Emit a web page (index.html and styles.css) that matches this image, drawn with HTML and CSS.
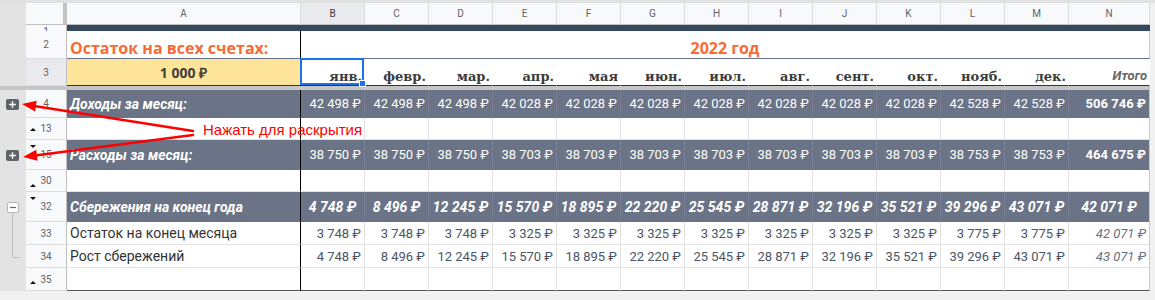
FILE: index.html
```html
<!DOCTYPE html>
<html lang="ru">
<head>
<meta charset="utf-8">
<title>Бюджет 2022</title>
<link rel="stylesheet" href="styles.css">
</head>
<body>
<div class="sheet">
  <div class="topstrip"></div>

  <div class="row r-hdr">
    <div class="g"></div>
    <div class="corner"></div>
    <div class="ch">A</div>
    <div class="ch ch-sel">B</div>
    <div class="ch">C</div>
    <div class="ch">D</div>
    <div class="ch">E</div>
    <div class="ch">F</div>
    <div class="ch">G</div>
    <div class="ch">H</div>
    <div class="ch">I</div>
    <div class="ch">J</div>
    <div class="ch">K</div>
    <div class="ch">L</div>
    <div class="ch">M</div>
    <div class="ch">N</div>
  </div>

  <div class="row r1">
    <div class="g"></div>
    <div class="rh rh-cut"><span>1</span></div>
    <div class="navy"></div>
  </div>

  <div class="row r2">
    <div class="g"></div>
    <div class="rh">2</div>
    <div class="c a title">Остаток на всех счетах:</div>
    <div class="c year n">2022 год</div>
  </div>

  <div class="row r3">
    <div class="g"></div>
    <div class="rh rh-sel">3</div>
    <div class="c a balance">1 000 ₽</div>
    <div class="c mon sel">янв.</div>
    <div class="c mon">февр.</div>
    <div class="c mon">мар.</div>
    <div class="c mon">апр.</div>
    <div class="c mon">мая</div>
    <div class="c mon">июн.</div>
    <div class="c mon">июл.</div>
    <div class="c mon">авг.</div>
    <div class="c mon">сент.</div>
    <div class="c mon">окт.</div>
    <div class="c mon">нояб.</div>
    <div class="c mon">дек.</div>
    <div class="c mon total n">Итого</div>
  </div>

  <div class="frz"></div>

  <div class="row rbig dark">
    <div class="g"><svg class="pm" width="13" height="11" viewBox="0 0 13 11"><rect width="13" height="11" rx="2" fill="#5f6368"/><path d="M3.2 5.5h6.6M6.5 2.2v6.6" stroke="#fff" stroke-width="1.4"/></svg></div>
    <div class="rh">4</div>
    <div class="c a lbl">Доходы за месяц:</div>
    <div class="c v">42 498 ₽</div>
    <div class="c v">42 498 ₽</div>
    <div class="c v">42 498 ₽</div>
    <div class="c v">42 028 ₽</div>
    <div class="c v">42 028 ₽</div>
    <div class="c v">42 028 ₽</div>
    <div class="c v">42 028 ₽</div>
    <div class="c v">42 028 ₽</div>
    <div class="c v">42 028 ₽</div>
    <div class="c v">42 028 ₽</div>
    <div class="c v">42 528 ₽</div>
    <div class="c v">42 528 ₽</div>
    <div class="c v n strong">506 746 ₽</div>
  </div>

  <div class="row rsm">
    <div class="g"></div>
    <div class="rh up">13</div>
    <div class="c a"></div>
    <div class="c"></div><div class="c"></div><div class="c"></div><div class="c"></div>
    <div class="c"></div><div class="c"></div><div class="c"></div><div class="c"></div>
    <div class="c"></div><div class="c"></div><div class="c"></div><div class="c"></div>
    <div class="c n"></div>
  </div>

  <div class="row rgrp dark">
    <div class="g"><svg class="pm" width="13" height="11" viewBox="0 0 13 11"><rect width="13" height="11" rx="2" fill="#5f6368"/><path d="M3.2 5.5h6.6M6.5 2.2v6.6" stroke="#fff" stroke-width="1.4"/></svg></div>
    <div class="rh dn">15</div>
    <div class="c a lbl">Расходы за месяц:</div>
    <div class="c v">38 750 ₽</div>
    <div class="c v">38 750 ₽</div>
    <div class="c v">38 750 ₽</div>
    <div class="c v">38 703 ₽</div>
    <div class="c v">38 703 ₽</div>
    <div class="c v">38 703 ₽</div>
    <div class="c v">38 703 ₽</div>
    <div class="c v">38 703 ₽</div>
    <div class="c v">38 703 ₽</div>
    <div class="c v">38 703 ₽</div>
    <div class="c v">38 753 ₽</div>
    <div class="c v">38 753 ₽</div>
    <div class="c v n strong">464 675 ₽</div>
  </div>

  <div class="row rsm">
    <div class="g"></div>
    <div class="rh up up30">30</div>
    <div class="c a"></div>
    <div class="c"></div><div class="c"></div><div class="c"></div><div class="c"></div>
    <div class="c"></div><div class="c"></div><div class="c"></div><div class="c"></div>
    <div class="c"></div><div class="c"></div><div class="c"></div><div class="c"></div>
    <div class="c n"></div>
  </div>

  <div class="row rgrp dark grp">
    <div class="g g-minus"><svg class="pm" width="12" height="11" viewBox="0 0 12 11"><rect x="0.5" y="0.5" width="11" height="10" rx="1.5" fill="#fff" stroke="#b5b5b5"/><path d="M3 5.5h6" stroke="#666" stroke-width="1.2"/></svg></div>
    <div class="rh dn">32</div>
    <div class="c a lbl">Сбережения на конец года</div>
    <div class="c v">4 748 ₽</div>
    <div class="c v">8 496 ₽</div>
    <div class="c v">12 245 ₽</div>
    <div class="c v">15 570 ₽</div>
    <div class="c v">18 895 ₽</div>
    <div class="c v">22 220 ₽</div>
    <div class="c v">25 545 ₽</div>
    <div class="c v">28 871 ₽</div>
    <div class="c v">32 196 ₽</div>
    <div class="c v">35 521 ₽</div>
    <div class="c v">39 296 ₽</div>
    <div class="c v">43 071 ₽</div>
    <div class="c v n">42 071 ₽</div>
  </div>

  <div class="row rtxt lt">
    <div class="g g-line"></div>
    <div class="rh">33</div>
    <div class="c a txt">Остаток на конец месяца</div>
    <div class="c v">3 748 ₽</div>
    <div class="c v">3 748 ₽</div>
    <div class="c v">3 748 ₽</div>
    <div class="c v">3 325 ₽</div>
    <div class="c v">3 325 ₽</div>
    <div class="c v">3 325 ₽</div>
    <div class="c v">3 325 ₽</div>
    <div class="c v">3 325 ₽</div>
    <div class="c v">3 325 ₽</div>
    <div class="c v">3 325 ₽</div>
    <div class="c v">3 775 ₽</div>
    <div class="c v">3 775 ₽</div>
    <div class="c v n it">42 071 ₽</div>
  </div>

  <div class="row rtxt lt">
    <div class="g g-end"></div>
    <div class="rh">34</div>
    <div class="c a txt">Рост сбережений</div>
    <div class="c v">4 748 ₽</div>
    <div class="c v">8 496 ₽</div>
    <div class="c v">12 245 ₽</div>
    <div class="c v">15 570 ₽</div>
    <div class="c v">18 895 ₽</div>
    <div class="c v">22 220 ₽</div>
    <div class="c v">25 545 ₽</div>
    <div class="c v">28 871 ₽</div>
    <div class="c v">32 196 ₽</div>
    <div class="c v">35 521 ₽</div>
    <div class="c v">39 296 ₽</div>
    <div class="c v">43 071 ₽</div>
    <div class="c v n it">43 071 ₽</div>
  </div>

  <div class="row rtxt last">
    <div class="g"></div>
    <div class="rh up up35">35</div>
    <div class="c a"></div>
    <div class="c"></div><div class="c"></div><div class="c"></div><div class="c"></div>
    <div class="c"></div><div class="c"></div><div class="c"></div><div class="c"></div>
    <div class="c"></div><div class="c"></div><div class="c"></div><div class="c"></div>
    <div class="c n"></div>
  </div>

  <div class="annot">
    <svg class="arrows" width="1155" height="300" viewBox="0 0 1155 300">
      <g stroke="#ff0000" stroke-width="2.6" fill="none" stroke-linecap="round">
        <line x1="193" y1="131" x2="35.8" y2="106.2"/>
        <line x1="193" y1="135" x2="36.9" y2="155.2"/>
      </g>
      <g fill="#ff0000">
        <polygon points="22,104 36.7,100.8 35,111.6"/>
        <polygon points="23,157 36.2,149.7 37.6,160.7"/>
      </g>
    </svg>
    <div class="annot-text">Нажать для раскрытия</div>
  </div>
</div>
</body>
</html>
```

FILE: styles.css
```css
* { box-sizing: border-box; }
html, body { margin: 0; padding: 0; }
body {
  width: 1155px;
  height: 300px;
  overflow: hidden;
  background: #f1f1f1;
  font-family: Roboto, "Liberation Sans", Arial, sans-serif;
}
.sheet { position: relative; width: 1155px; }
.topstrip { height: 3px; background: #e1e1e1; }

.row {
  display: grid;
  grid-template-columns: 26px 41px 234px repeat(12, 64px) 81px 5px;
}
.r-hdr { height: 22px; }
.r1 { height: 6px; }
.r2 { height: 28px; }
.r3 { height: 27px; }
.rbig { height: 28px; }
.rsm { height: 22px; }
.rgrp { height: 30px; }
.rtxt { height: 23px; }
.frz { height: 4px; width: 1150px; background: #c6c6c6; }

/* gutter */
.g {
  background: #e3e3e3;
  display: flex;
  align-items: center;
  padding-left: 6px;
  position: relative;
}
.g-minus .pm { margin-top: 1px; margin-left: 1px; }
.g-minus::after {
  content: "";
  position: absolute;
  left: 12px; top: 21px; bottom: 0;
  width: 1px;
  background: #c2c2c2;
}
.g-line::after {
  content: "";
  position: absolute;
  left: 12px; top: 0; bottom: 0;
  width: 1px;
  background: #c2c2c2;
}
.g-end::after {
  content: "";
  position: absolute;
  left: 12px; top: 0;
  width: 7px; height: 12px;
  border-left: 1px solid #c2c2c2;
  border-bottom: 1px solid #c2c2c2;
}

/* headers */
.corner {
  background: #f8f9fa;
  border-right: 4px solid #c2c2c2;
  border-bottom: 1px solid #c0c0c0;
}
.ch {
  background: #f8f9fa;
  border-right: 1px solid #dadce0;
  border-bottom: 1px solid #c0c0c0;
  font-size: 10px;
  color: #5f6368;
  display: flex;
  align-items: center;
  justify-content: center;
}
.ch-sel { background: #e8eaed; color: #3c4043; }

.rh {
  background: #f8f9fa;
  border-right: 1px solid #c0c0c0;
  border-bottom: 1px solid #dadce0;
  font-size: 10px;
  color: #5f6368;
  display: flex;
  align-items: center;
  justify-content: center;
  position: relative;
}
.rh-sel { background: #e8eaed; }
.rh-cut { align-items: flex-start; overflow: hidden; border-bottom: none; }
.rh-cut span { display: block; line-height: 10px; padding-top: 2px; }
.up::before {
  content: "";
  position: absolute;
  left: 4px; bottom: 8px;
  border-left: 3px solid transparent;
  border-right: 3px solid transparent;
  border-bottom: 3px solid #111;
}
.up30::before { bottom: 4px; }
.up35::before { bottom: 6px; }
.dn::before {
  content: "";
  position: absolute;
  left: 4px; top: 5px;
  border-left: 3px solid transparent;
  border-right: 3px solid transparent;
  border-top: 3px solid #111;
}

/* cells */
.navy { grid-column: 3 / 17; background: #34495e; }
.c {
  background: #fff;
  border-right: 1px solid #e2e2e2;
  border-bottom: 1px solid #e2e2e2;
  display: flex;
  align-items: center;
  white-space: nowrap;
  overflow: hidden;
}
.a { border-right-color: #000; padding-left: 3px; overflow: visible; }
.n { border-right-color: #cbcbcb; }

.title {
  color: #fa6933;
  font-family: "Open Sans", sans-serif;
  font-weight: 700;
  font-size: 16px;
  line-height: 20px;
  align-items: flex-end;
  padding-bottom: 0;
  border-bottom-color: #66708a;
}
.year {
  grid-column: 4 / 17;
  justify-content: center;
  align-items: flex-end;
  color: #fa6933;
  font-family: "Open Sans", sans-serif;
  font-weight: 700;
  font-size: 16px;
  line-height: 20px;
  border-bottom-color: #66708a;
}

.balance {
  background: #ffe599;
  justify-content: center;
  font-family: "Open Sans", sans-serif;
  font-weight: 700;
  font-size: 14px;
  color: #404040;
  border-bottom-color: #333;
  padding-left: 0;
}
.mon {
  justify-content: flex-end;
  align-items: flex-end;
  padding: 0 2px 1px 0;
  font-family: "DejaVu Serif", serif;
  font-weight: 700;
  font-size: 13px;
  color: #3c3c3c;
  border-right-color: #fff;
  border-bottom-color: #333;
}
.total {
  font-family: Roboto, sans-serif;
  font-style: italic;
  font-weight: 700;
  font-size: 13px;
  color: #666;
  padding-bottom: 2px;
}
.sel { position: relative; overflow: visible; }
.sel::after {
  content: "";
  position: absolute;
  left: -1px; top: -1px; right: 0; bottom: 0;
  border: 2px solid #1a73e8;
}
.sel::before {
  content: "";
  position: absolute;
  right: -2px; bottom: -2px;
  width: 5px; height: 5px;
  background: #1a73e8;
  border: 1px solid #fff;
  z-index: 1;
}

.v {
  justify-content: flex-end;
  padding-right: 3px;
  font-size: 13px;
}
.dark .c {
  background: #6b7386;
  color: #fff;
  border-right-color: #79819a;
  border-bottom-color: #6b7386;
}
.dark .a { border-right-color: #000; }
.dark .n { border-right-color: #cbcbcb; }
.lbl { font-style: italic; font-weight: 700; font-size: 14px; }
.strong { font-weight: 700; }
.grp .v {
  justify-content: center;
  padding-right: 0;
  font-weight: 700;
  font-style: italic;
  font-size: 14px;
}

.txt { font-size: 14px; color: #333; }
.lt .v { color: #4d5566; }
.lt .it { font-style: italic; color: #6a6f7a; }
.last .c { border-bottom-color: #555; }

/* annotation overlay */
.annot {
  position: absolute;
  left: 0; top: 0;
  width: 1155px; height: 300px;
  pointer-events: none;
}
.arrows { position: absolute; left: 0; top: 0; }
.annot-text {
  position: absolute;
  left: 203px; top: 121px;
  color: #ff0000;
  font-family: "Liberation Sans", Arial, sans-serif;
  font-size: 15px;
  line-height: 17px;
  white-space: nowrap;
}
```
